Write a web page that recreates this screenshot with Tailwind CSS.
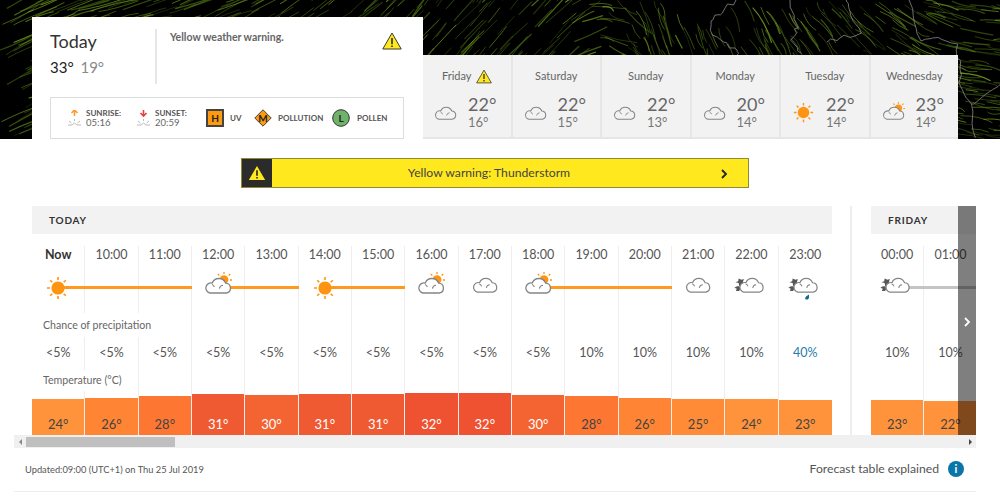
<!DOCTYPE html>
<html lang="en">
<head>
  <meta charset="UTF-8" />
  <title>Weather forecast</title>
  <script src="https://cdn.jsdelivr.net/npm/@tailwindcss/browser@4"></script>
</head>
<body class="w-[1000px] h-[501px] overflow-hidden bg-white font-[Lato,sans-serif] text-[#444]">
  <!-- Icon sprites -->
  <svg class="hidden">
    <symbol id="cloud" viewBox="0 0 28 17">
      <path d="M5.8 16H22.4A5 5 0 0 0 21.6 6.1A7.2 7.2 0 0 0 8.2 6A5.1 5.1 0 0 0 5.8 16Z" fill="var(--cloud-fill,#fff)" stroke="#858585" stroke-width="1.3"/>
      <path d="M15.4 11.6A4 4 0 0 1 19 8.2M8 7.4A4 4 0 0 1 10.4 10" fill="none" stroke="#858585" stroke-width="1.1"/>
    </symbol>
    <symbol id="sun" viewBox="0 0 24 24">
      <circle cx="12" cy="12" r="6.6" fill="#ff9413"/>
      <path d="M12 1v3M12 20v3M1 12h3M20 12h3M4.2 4.2l2.1 2.1M17.7 17.7l2.1 2.1M4.2 19.8l2.1-2.1M17.7 6.3l2.1-2.1" stroke="#ff9413" stroke-width="1.6"/>
    </symbol>
    <symbol id="suncloud" viewBox="0 0 28 22">
      <circle cx="20" cy="7.6" r="4.4" fill="#ff9413"/>
      <path d="M20 0v2M13.800 2l1.500 1.500M26.200 2l-1.500 1.500M28 8h-2" stroke="#ff9413" stroke-width="1.300"/>
      <path d="M5.800 21H22.400A5 5 0 0 0 21.600 11.100A7.200 7.200 0 0 0 8.200 11A5.100 5.100 0 0 0 5.800 21Z" fill="var(--cloud-fill,#fff)" stroke="#858585" stroke-width="1.300"/>
      <path d="M15.400 16.600A4 4 0 0 1 19 13.200M8 12.400A4 4 0 0 1 10.400 15" fill="none" stroke="#858585" stroke-width="1.100"/>
    </symbol>
    <symbol id="nightcloud" viewBox="0 0 34 17">
      <path d="M5.500 1.500l3 1.500 2.500-1-1 3.500 2 2.500-3.500-.5-2.500 2.500-.5-3.500L2 5.500l3-1zM3 10l3-.5 1.500 2.500L6 15l-3.500 0L3.500 12.500 1 11.500z" fill="#55585a"/>
      <path d="M10.800 16H27.400A5 5 0 0 0 26.600 6.100A7.200 7.200 0 0 0 13.200 6A5.100 5.100 0 0 0 10.800 16Z" fill="#fff" stroke="#858585" stroke-width="1.300"/>
      <path d="M20.400 11.600A4 4 0 0 1 24 8.200M13 7.400A4 4 0 0 1 15.400 10" fill="none" stroke="#858585" stroke-width="1.100"/>
    </symbol>
    <symbol id="warn" viewBox="0 0 20 18">
      <path d="M10 1L19.200 17H.8Z" fill="#ffe81e" stroke="#3a3a2a" stroke-width="1" stroke-linejoin="round"/>
      <path d="M10 6v6.200M10 13.500v1.600" stroke="#222" stroke-width="1.500"/>
    </symbol>
  </svg>

  <!-- Hero with wind map -->
  <div class="relative h-[139px] bg-black overflow-hidden">
    <svg id="wind" class="absolute inset-0" width="1000" height="139"></svg>
    <div class="relative flex items-end h-full pl-[32px]">
      <div class="w-[391px] h-[122px] bg-white pt-[12px] pl-[18px] pr-[19px]">
        <div class="flex h-[55px]">
          <div class="w-[107px] border-r-2 border-[#e6e6e6]">
            <div class="text-[18px] leading-[24px] text-[#333]">Today</div>
            <div class="mt-[5px] text-[15px] leading-[18px]"><span class="text-[#222]">33°</span> <span class="ml-[3px] text-[#8a8a8a]">19°</span></div>
          </div>
          <div class="flex-1 pl-[13px] text-[10.500px] font-bold leading-[16px] text-[#666]">Yellow weather warning.</div>
          <svg class="w-[20px] h-[18px] mt-[3px] mr-[2px]"><use href="#warn"/></svg>
        </div>
        <div class="mt-[13px] h-[42px] border border-[#ddd] flex items-center pl-[17px] text-[8px] font-bold text-[#555]">
          <svg width="13" height="17" viewBox="0 0 13 17" class="mt-[1px]"><path d="M6.500 0v6M3.500 3l3-3 3 3" fill="none" stroke="#ff9a2a" stroke-width="1.600"/><path d="M6.500 9v2M1 11l2.500 2M12 11l-2.500 2M0 15h4l2.500-2 2.500 2h4" fill="none" stroke="#aaa" stroke-width=".8"/></svg>
          <div class="ml-[5px] w-[51px] leading-[10px]"><div>SUNRISE:</div><div class="text-[9.500px] font-normal text-[#666]">05:16</div></div>
          <svg width="13" height="17" viewBox="0 0 13 17" class="mt-[1px]"><path d="M6.500 6V0M3.500 3l3 3 3-3" fill="none" stroke="#e8413c" stroke-width="1.600"/><path d="M6.500 9v2M1 11l2.500 2M12 11l-2.500 2M0 15h4l2.500-2 2.500 2h4" fill="none" stroke="#aaa" stroke-width=".8"/></svg>
          <div class="ml-[5px] w-[51px] leading-[10px]"><div>SUNSET:</div><div class="text-[9.500px] font-normal text-[#666]">20:59</div></div>
          <div class="w-[18px] h-[18px] bg-[#ff9a0e] border-2 border-[#444] flex items-center justify-center text-[10px] font-bold text-[#222]">H</div>
          <span class="ml-[6px] w-[24px]">UV</span>
          <svg width="18" height="18" viewBox="0 0 18 18"><path d="M9 .8L17.200 9 9 17.200.8 9Z" fill="#ff9a0e" stroke="#444"/><text x="9" y="12.500" text-anchor="middle" font-size="10" font-weight="700" fill="#222">M</text></svg>
          <span class="ml-[6px] w-[54px]">POLLUTION</span>
          <svg width="18" height="18" viewBox="0 0 18 18"><circle cx="9" cy="9" r="8.300" fill="#6fb36b" stroke="#333" stroke-width="1"/><text x="9" y="12.500" text-anchor="middle" font-size="10" font-weight="700" fill="#222">L</text></svg>
          <span class="ml-[7px]">POLLEN</span>
        </div>
      </div>
      <div id="days" class="flex h-[84px] w-[535px] bg-[#f2f2f2] border-b-2 border-[#e6e6e6]"></div>
    </div>
  </div>

  <!-- Warning banner -->
  <div class="ml-[241px] mt-[19px] w-[508px] h-[30px] flex border border-[#8f8a3a] bg-[#ffe81e]">
    <div class="w-[30px] bg-[#2b2b2b] flex items-center justify-center">
      <svg class="w-[18px] h-[16px]" viewBox="0 0 20 18"><path d="M10 1L19.200 17H.8Z" fill="#ffe81e"/><path d="M10 6v6.200M10 13.500v1.600" stroke="#222" stroke-width="1.800"/></svg>
    </div>
    <div class="flex-1 flex items-center justify-center text-[12.200px] text-[#444] pr-[14px]">Yellow warning: Thunderstorm</div>
    <svg class="w-[8px] h-[10px] mt-[10px] mr-[20px]" viewBox="0 0 8 10"><path d="M2 1l4 4-4 4" fill="none" stroke="#222" stroke-width="1.800"/></svg>
  </div>

  <!-- Hourly table -->
  <div class="relative mt-[18px] ml-[14px] w-[962px] h-[229px] overflow-hidden flex pl-[18px]">
    <section class="w-[800px] shrink-0 relative">
      <div class="h-[28px] bg-[#f2f2f2] pl-[17px] flex items-center text-[10px] font-bold tracking-[0.8px] text-[#333]">TODAY</div>
      <div id="today" class="mt-[12px] h-[189px] flex"></div>
      <div class="absolute left-0 top-[107px] w-[130px] h-[24px] bg-white pl-[11px] pt-[1px] flex items-center text-[10.600px] text-[#666]">Chance of precipitation</div>
      <div class="absolute left-0 top-[164px] w-[102px] h-[21px] bg-white pl-[11px] flex items-center text-[10.600px] text-[#666]">Temperature (°C)</div>
    </section>
    <div class="w-[2px] shrink-0 ml-[18px] bg-[#eee]"></div>
    <section class="ml-[19px] w-[200px] shrink-0">
      <div class="h-[28px] bg-[#f2f2f2] pl-[17px] flex items-center text-[10px] font-bold tracking-[0.8px] text-[#333]">FRIDAY</div>
      <div id="friday" class="mt-[12px] h-[189px] flex"></div>
    </section>
    <div class="absolute right-0 top-0 w-[18px] h-full bg-black/50 flex items-center justify-center">
      <svg class="w-[8px] h-[12px] mt-[2px]" viewBox="0 0 8 12"><path d="M2 2l4 4-4 4" fill="none" stroke="#fff" stroke-width="1.800"/></svg>
    </div>
  </div>

  <!-- Scrollbar -->
  <div class="ml-[14px] w-[962px] h-[13px] bg-[#f0f0f0] flex items-center justify-between">
    <div class="w-[12px] h-full relative flex items-center justify-center"><div class="w-0 h-0 border-y-[3.500px] border-y-transparent border-r-[3.500px] border-r-[#888]"></div></div>
    <div class="w-[149px] h-[10px] bg-[#bfbfbf] mr-auto"></div>
    <div class="w-[12px] h-full flex items-center justify-center"><div class="w-0 h-0 border-y-[3.500px] border-y-transparent border-l-[3.500px] border-l-[#444]"></div></div>
  </div>

  <!-- Footer -->
  <div class="ml-[14px] w-[962px] h-[44px] border-b border-[#eee] flex items-center justify-between pl-[11px] pr-[12px]">
    <span class="text-[9.300px] text-[#555]">Updated:09:00 (UTC+1) on Thu 25 Jul 2019</span>
    <div class="flex items-center">
      <span class="text-[12.200px] text-[#555]">Forecast table explained</span>
      <div class="ml-[9px] w-[16px] h-[16px] rounded-full bg-[#0a76a8] text-white flex items-center justify-center text-[11px] font-bold">i</div>
    </div>
  </div>

  <script>
    // wind map: seeded so the picture stays the same
    let seed = 4711;
    const rnd = () => (seed = (seed * 16807) % 2147483647) / 2147483647;
    const stops = [[0,-28],[100,-16],[250,-26],[420,-50],[560,-45],[640,70],[780,62],[900,32],[960,10],[1000,6]];
    const angleAt = x => {
      for (let i = 1; i < stops.length; i++) {
        if (x <= stops[i][0]) {
          const t = (x - stops[i-1][0]) / (stops[i][0] - stops[i-1][0]);
          return stops[i-1][1] + t * (stops[i][1] - stops[i-1][1]);
        }
      }
      return 6;
    };
    let wind = '';
    for (let i = 0; i < 1100; i++) {
      const x = rnd() * 1000, y = rnd() * 139;
      const a = (angleAt(x) + (rnd() - 0.5) * 12) * Math.PI / 180;
      const len = (x < 30 || (x < 420 && y < 17) ? 26 : 12) + rnd() * 28;
      const dx = Math.cos(a) * len, dy = Math.sin(a) * len;
      const bend = (rnd() - 0.5) * 7;
      const col = ['#5f8818', '#4c7014', '#3a5810', '#759c20'][Math.floor(rnd() * 4)];
      wind += `<path d="M${x} ${y}q${dx/2 + bend} ${dy/2 - bend} ${dx} ${dy}" fill="none" stroke="${col}" stroke-width="${rnd() > 0.8 ? 1.2 : 0.8}" opacity="${0.45 + rnd() * 0.5}"/>`;
    }
    // coastlines, roughened a little
    const coasts = [
      [[736,0],[722,12],[712,18],[712,34],[728,44],[738,52],[735,58]],
      [[790,0],[797,28],[792,40],[802,55]],
      [[827,42],[840,38],[860,34],[850,10],[846,0]],
      [[909,0],[916,30],[921,40],[938,36],[957,45],[959,60],[961,90],[971,105],[975,139]],
      [[971,104],[985,96],[1000,85]]
    ];
    for (const c of coasts) {
      let d = `M${c[0][0]} ${c[0][1]}`;
      for (let i = 1; i < c.length; i++) {
        for (let s = 1; s <= 4; s++) {
          const x = c[i-1][0] + (c[i][0] - c[i-1][0]) * s / 4 + (rnd() - 0.5) * 4;
          const y = c[i-1][1] + (c[i][1] - c[i-1][1]) * s / 4 + (rnd() - 0.5) * 4;
          d += `L${x} ${y}`;
        }
      }
      wind += `<path d="${d}" fill="none" stroke="#8a8a8a" stroke-width="0.8"/>`;
    }
    document.getElementById('wind').innerHTML = wind;

    const icon = (name, cls) => `<svg class="${cls}"><use href="#${name}"/></svg>`;

    const days = [
      { name: 'Friday', warn: true, icon: 'cloud', hi: 22, lo: 16 },
      { name: 'Saturday', icon: 'cloud', hi: 22, lo: 15 },
      { name: 'Sunday', icon: 'cloud', hi: 22, lo: 13 },
      { name: 'Monday', icon: 'cloud', hi: 20, lo: 14 },
      { name: 'Tuesday', icon: 'sun', hi: 22, lo: 14 },
      { name: 'Wednesday', icon: 'suncloud', hi: 23, lo: 14 }
    ];
    document.getElementById('days').innerHTML = days.map((d, i) => `
      <div class="flex-1 ${i < 5 ? 'border-r-2 border-[#e6e6e6]' : ''} [--cloud-fill:#f2f2f2]">
        <div class="h-[18px] mt-[12px] flex items-center justify-center text-[11px] text-[#666]">${d.name}${d.warn ? icon('warn', 'w-[16px] h-[15px] ml-[4px]') : ''}</div>
        <div class="flex mt-[9px] pl-[11px]">
          <div class="w-[23px] h-[34px] flex items-center justify-center">
            ${d.icon === 'cloud' ? icon('cloud', 'w-[23px] h-[14px] mt-[3px]') : d.icon === 'sun' ? icon('sun', 'w-[21px] h-[21px] mt-[3px]') : icon('suncloud', 'w-[23px] h-[18px]')}
          </div>
          <div class="ml-[11px] text-[#666]">
            <div class="text-[18px] leading-[20px]">${d.hi}°</div>
            <div class="mt-[1px] text-[13px] leading-[15px] text-[#777]">${d.lo}°</div>
          </div>
        </div>
      </div>`).join('');

    const tempColor = t => t >= 32 ? '#ee5231' : t === 31 ? '#f05a32' : t === 30 ? '#f46433' : t === 28 ? '#fd7733' : t === 26 ? '#ff8534' : t === 25 ? '#ff8b37' : '#ff933b';

    const renderCell = (h, last) => `
      <div class="w-[53.330px] shrink-0 flex flex-col ${last ? '' : 'border-r border-[#eee]'}">
        <div class="h-[18px] flex items-center justify-center text-[12.500px] ${h.bold ? 'font-bold text-[#333]' : 'text-[#555]'}">${h.t}</div>
        <div class="relative h-[46px] flex items-center justify-center">
          ${h.line ? `<div class="absolute top-[22px] h-[2.500px] ${h.line === 'half' ? 'left-1/2' : 'left-0'} -right-px ${h.grey ? 'bg-[#c4c4c4]' : 'bg-[#ff9a1e]'}"></div>` : ''}
          ${h.i === 'sun' ? icon('sun', 'relative w-[24px] h-[24px] mt-[1px]') : ''}
          ${h.i === 'cloud' ? icon('cloud', 'relative w-[28px] h-[16px] -mt-[4px]') : ''}
          ${h.i === 'suncloud' ? icon('suncloud', 'relative w-[28px] h-[22px] -mt-[9px]') : ''}
          ${h.i === 'night' ? icon('nightcloud', 'relative w-[33px] h-[16px] -mt-[4px] -ml-[3px]') : ''}
          ${h.rain ? '<svg class="absolute top-[30px] left-[25px]" width="6" height="6" viewBox="0 0 6 6"><path d="M5 .5C5 3 5.500 5.500 2.800 5.500S.5 3 5 .5Z" fill="#0a6a9a"/></svg>' : ''}
        </div>
        <div class="mt-[32px] h-[22px] flex items-center justify-center text-[12.500px] ${h.rainy ? 'text-[#2a7bab]' : 'text-[#555]'}">${h.p}</div>
        <div class="mt-auto flex items-end justify-center pb-[1px] text-[13px] ${h.c >= 30 ? 'text-white' : 'text-[#444]'}" style="height:${h.bar}px;background:${tempColor(h.c)}">${h.c}°</div>
      </div>`;

    const today = [
      { t: 'Now', bold: true, i: 'sun', line: 'half', p: '&lt;5%', c: 24, bar: 36 },
      { t: '10:00', line: 'full', p: '&lt;5%', c: 26, bar: 37 },
      { t: '11:00', line: 'full', p: '&lt;5%', c: 28, bar: 39 },
      { t: '12:00', i: 'suncloud', line: 'half', p: '&lt;5%', c: 31, bar: 41 },
      { t: '13:00', line: 'full', p: '&lt;5%', c: 30, bar: 40 },
      { t: '14:00', i: 'sun', line: 'half', p: '&lt;5%', c: 31, bar: 41 },
      { t: '15:00', line: 'full', p: '&lt;5%', c: 31, bar: 41 },
      { t: '16:00', i: 'suncloud', p: '&lt;5%', c: 32, bar: 42 },
      { t: '17:00', i: 'cloud', p: '&lt;5%', c: 32, bar: 42 },
      { t: '18:00', i: 'suncloud', line: 'half', p: '&lt;5%', c: 30, bar: 40 },
      { t: '19:00', line: 'full', p: '10%', c: 28, bar: 39 },
      { t: '20:00', line: 'full', p: '10%', c: 26, bar: 37 },
      { t: '21:00', i: 'cloud', p: '10%', c: 25, bar: 36 },
      { t: '22:00', i: 'night', p: '10%', c: 24, bar: 36 },
      { t: '23:00', i: 'night', rain: true, p: '40%', rainy: true, c: 23, bar: 35 }
    ];
    document.getElementById('today').innerHTML = today.map((h, i) => renderCell(h, i === 14)).join('');

    const friday = [
      { t: '00:00', i: 'night', line: 'half', grey: true, p: '10%', c: 23, bar: 35 },
      { t: '01:00', line: 'full', grey: true, p: '10%', c: 22, bar: 34 }
    ];
    document.getElementById('friday').innerHTML = friday.map(h => renderCell(h, false)).join('');
  </script>
</body>
</html>
